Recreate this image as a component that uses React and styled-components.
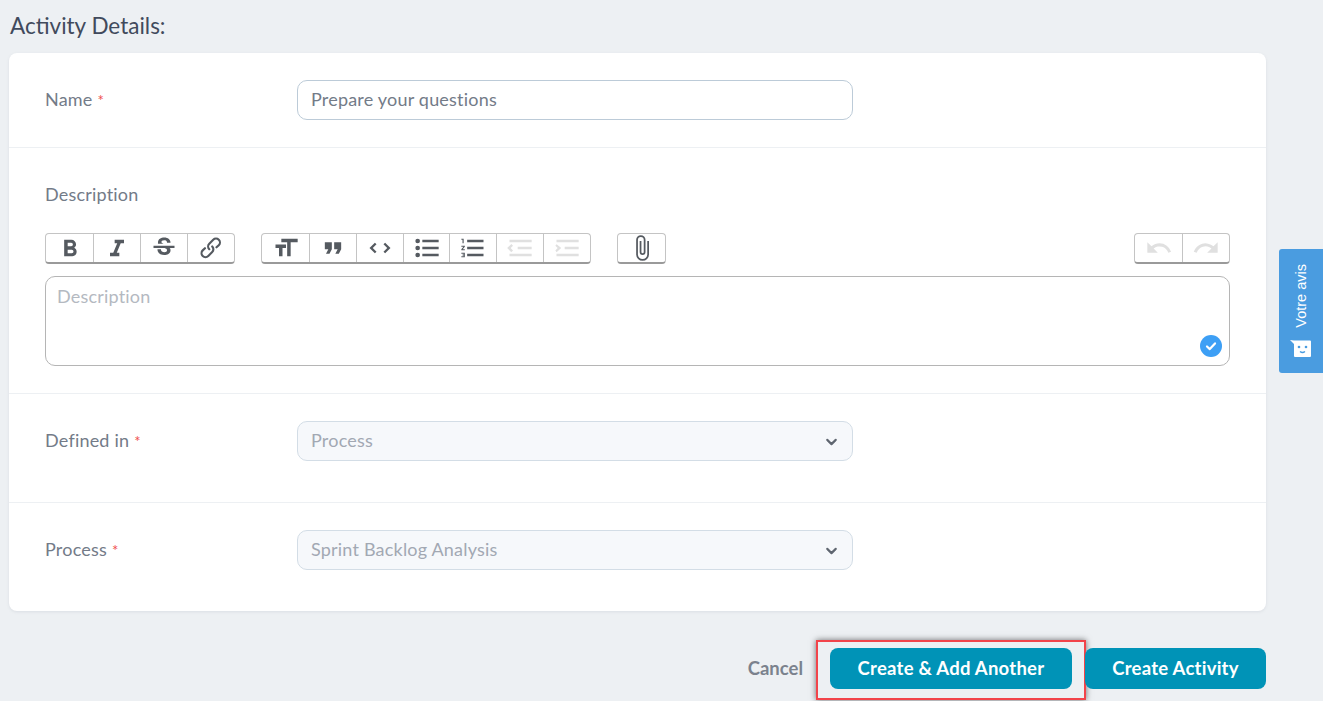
import React from "react";
import styled, { createGlobalStyle } from "styled-components";
import { ChevronDown } from "lucide-react";

const font = `"Lato", "Noto Sans", sans-serif`;

const Global = createGlobalStyle`
  html, body { margin: 0; padding: 0; background: #edf0f3; }
  body { font-family: ${font}; height: 701px; overflow: hidden; }
`;

const Page = styled.div`
  position: relative;
  width: 1323px;
  height: 701px;
  padding: 13px 57px 0 9px;
  box-sizing: border-box;
  background: #edf0f3;
  overflow: hidden;
`;
const Title = styled.h2`
  margin: 0 0 14px 1px;
  font-size: 22.5px;
  line-height: 26px;
  font-weight: 400;
  color: #414a5c;
`;
const Card = styled.div`
  background: #fff;
  border-radius: 8px;
  box-shadow: 0 1px 3px rgba(120, 130, 145, 0.15);
  height: 558px;
  display: flex;
  flex-direction: column;
`;
const Row = styled.div`
  display: flex;
  align-items: center;
  height: ${(p) => p.$h}px;
  padding: 0 36px ${(p) => p.$pb || 0}px;
  box-sizing: border-box;
  border-bottom: ${(p) => (p.$last ? "none" : "1px solid #edf0f3")};
`;
const DescRow = styled.div`
  height: 246px;
  padding: 35px 36px 0;
  box-sizing: border-box;
  border-bottom: 1px solid #edf0f3;
`;
const Label = styled.label`
  width: 252px;
  flex: none;
  font-size: 18px;
  letter-spacing: 0.2px;
  line-height: 22px;
  margin-bottom: 2px;
  color: #737b88;
`;
const Star = styled.span`
  color: #ef4d4d;
  font-size: 15px;
  margin-left: 5px;
`;
const Field = styled.div`
  width: 556px;
  height: 40px;
  box-sizing: border-box;
  border: 1px solid ${(p) => (p.$disabled ? "#d3dde6" : "#bccbd8")};
  border-radius: 10px;
  background: ${(p) => (p.$disabled ? "#f6f8fb" : "#fff")};
  display: flex;
  align-items: center;
  justify-content: space-between;
  padding: 0 12px 2px 13px;
  font-size: 18px;
  letter-spacing: 0.2px;
  color: ${(p) => (p.$disabled ? "#a2a8b3" : "#737b88")};
  svg { color: #5f6670; transform: translateY(1.5px); }
`;
const DescLabel = styled(Label)`
  display: block;
  width: auto;
  margin-bottom: 28px;
`;
const Toolbar = styled.div`
  display: flex;
  height: 31px;
  margin-bottom: 12px;
`;
const Group = styled.div`
  display: flex;
  border: 1px solid #c4c4c4;
  border-bottom: 2px solid #9a9a9a;
  border-radius: 4px;
  box-sizing: border-box;
  margin-right: ${(p) => p.$mr || 0}px;
  margin-left: ${(p) => (p.$push ? "auto" : 0)};
`;
const ToolButton = styled.span`
  width: ${(p) => p.$w || 47}px;
  box-sizing: border-box;
  display: flex;
  align-items: center;
  justify-content: center;
  color: ${(p) => (p.$off ? "#e0e0e0" : "#555a60")};
  & + & { border-left: 1px solid #c4c4c4; }
`;
const Editor = styled.div`
  position: relative;
  height: 90px;
  box-sizing: border-box;
  border: 1px solid #b5b5b5;
  border-radius: 10px;
  padding: 8px 11px;
  font-size: 18px;
  letter-spacing: 0.2px;
  line-height: 22px;
  color: #b4b9c1;
`;
const Check = styled.span`
  position: absolute;
  right: 7px;
  bottom: 8px;
  width: 22px;
  height: 22px;
  border-radius: 50%;
  background: #3d9ff5;
  display: flex;
  align-items: center;
  justify-content: center;
`;
const Footer = styled.div`
  display: flex;
  justify-content: flex-end;
  align-items: center;
  margin-top: 37px;
`;
const Cancel = styled.span`
  font-size: 18.5px;
  font-weight: 700;
  color: #7b828d;
  margin-right: 27px;
  padding-bottom: 1px;
`;
const Primary = styled.button`
  position: relative;
  width: ${(p) => p.$w}px;
  height: 41px;
  margin-right: ${(p) => p.$mr || 0}px;
  border: 0;
  border-radius: 8px;
  background: #0093b7;
  color: #fff;
  font: 700 18.5px ${font};
  letter-spacing: 0.25px;
  padding: 0 0 2px;
`;
const Highlight = styled.span`
  position: absolute;
  left: -14px;
  top: -8px;
  right: -14px;
  bottom: -11px;
  border: 2px solid #f2444a;
  box-shadow: 0 0 6px rgba(0, 0, 0, 0.55);
`;
const FeedbackTab = styled.div`
  position: absolute;
  left: 1279px;
  top: 249px;
  width: 44px;
  height: 124px;
  background: #4a9ce0;
  border-radius: 3px 0 0 3px;
  display: flex;
  flex-direction: column;
  align-items: center;
  justify-content: flex-end;
  padding-bottom: 15px;
  box-sizing: border-box;
  gap: 12px;
`;
const FeedbackText = styled.span`
  writing-mode: vertical-rl;
  transform: rotate(180deg);
  font: 14.5px "Liberation Sans", sans-serif;
  color: #fff;
`;

const Ico = ({ d, size = 28 }) => (
  <svg width={size} height={size} viewBox="0 0 24 24" fill="currentColor"><path d={d} /></svg>
);

const icons = {
  bold: "M15.6 11.8c1-.7 1.6-1.8 1.6-2.8a4 4 0 0 0-4-4H7v14h7c2.1 0 3.7-1.7 3.7-3.8 0-1.5-.8-2.8-2.1-3.4zM10 7.5h3a1.5 1.5 0 1 1 0 3h-3v-3zm3.5 9H10v-3h3.5a1.5 1.5 0 1 1 0 3z",
  italic: "M10 5v3h2.2l-3.4 8H6v3h8v-3h-2.2l3.4-8H18V5h-8z",
  strike: "M6.85 7.08C6.85 4.37 9.45 3 12.24 3c1.64 0 3 .49 3.9 1.28.77.65 1.46 1.73 1.46 3.24h-3.01c0-.31-.05-.59-.15-.85-.29-.86-1.2-1.28-2.25-1.28-1.86 0-2.34.72-2.34 1.37 0 .45.23.83.45 1.01.22.18.66.37 1.3.6H6.85c-.03-.1 0-.86 0-1.29zM21 12v-2H3v2h9.62c1.15.45 1.96.75 1.96 1.97 0 1-.81 1.67-2.28 1.67-1.54 0-2.93-.54-2.93-2.51H6.4c0 .55.08 1.13.24 1.58.81 2.29 3.29 3.3 5.67 3.3 2.27 0 5.3-.89 5.3-4.05 0-.34-.02-1.4-.79-2.01H21z",
  link: "M9.88 13.7a4.3 4.3 0 0 1 0-6.07l3.37-3.37a4.26 4.26 0 0 1 6.07 0 4.3 4.3 0 0 1 0 6.06l-1.96 1.72a.91.91 0 1 1-1.3-1.3l1.97-1.71a2.46 2.46 0 0 0-3.48-3.48l-3.38 3.37a2.46 2.46 0 0 0 0 3.48.91.91 0 1 1-1.3 1.3zM4.25 19.46a4.3 4.3 0 0 1 0-6.07l1.93-1.9a.91.91 0 1 1 1.3 1.3l-1.93 1.9a2.46 2.46 0 0 0 3.48 3.48l3.37-3.38c.96-.96.96-2.52 0-3.48a.91.91 0 1 1 1.3-1.3 4.3 4.3 0 0 1 0 6.07l-3.38 3.38a4.26 4.26 0 0 1-6.07 0z",
  heading: "M12 9v3H9v7H6v-7H3V9h9zM8 4h14v3h-6v12h-3V7H8V4z",
  quote: "M6 17h3l2-4V7H5v6h3zm8 0h3l2-4V7h-6v6h3z",
  code: "M18.2 12L15 15.2l1.4 1.4L21 12l-4.6-4.6L15 8.8l3.2 3.2zM5.8 12L9 8.8 7.6 7.4 3 12l4.6 4.6L9 15.2 5.8 12z",
  bullets: "M4 4a2 2 0 1 0 0 4 2 2 0 0 0 0-4zm0 6a2 2 0 1 0 0 4 2 2 0 0 0 0-4zm0 6a2 2 0 1 0 0 4 2 2 0 0 0 0-4zm4 3h14v-2H8v2zm0-6h14v-2H8v2zm0-8v2h14V5H8z",
  numbers: "M2 17h2v.5H3v1h1v.5H2v1h3v-4H2v1zm1-9h1V4H2v1h1v3zm-1 3h1.8L2 13.1v.9h3v-1H3.2L5 10.9V10H2v1zm5-6v2h14V5H7zm0 14h14v-2H7v2zm0-6h14v-2H7v2z",
  outdent: "M3 19h19v-2H3v2zm7-6h12v-2H10v2zm-8.3-.3l2.8 2.9L6 14.2 4 12l2-2-1.4-1.5L1 12l.7.7zM3 5v2h19V5H3z",
  indent: "M3 19h19v-2H3v2zm7-6h12v-2H10v2zm-6.9-4.3L2 10.1 4 12l-2 2.2 1.1 1.4L7 12l-.7-.7-3.2-2.6zM3 5v2h19V5H3z",
  attach: "M16.5 6v11.5a4 4 0 1 1-8 0V5a2.5 2.5 0 0 1 5 0v10.5a1 1 0 1 1-2 0V6H10v9.5a2.5 2.5 0 0 0 5 0V5a4 4 0 1 0-8 0v12.5a5.5 5.5 0 0 0 11 0V6h-1.5z",
  undo: "M12.5 8c-2.6 0-5 1-6.9 2.6L2 7v9h9l-3.6-3.6A8 8 0 0 1 20 16l2.4-.8a10.5 10.5 0 0 0-9.9-7.2z",
  redo: "M18.4 10.6a10.5 10.5 0 0 0-16.9 4.6L4 16a8 8 0 0 1 12.7-3.6L13 16h9V7l-3.6 3.6z",
};

const groups = [
  { mr: 26, items: [["bold"], ["italic"], ["strike"], ["link"]] },
  { mr: 26, items: [["heading"], ["quote"], ["code"], ["bullets", 46], ["numbers"], ["outdent", 47, true], ["indent", 47, true]] },
  { items: [["attach"]] },
  { push: true, items: [["undo", 47, true], ["redo", 47, true]] },
];

export default function App() {
  return (
    <Page>
      <Global />
      <Title>Activity Details:</Title>
      <Card>
        <Row $h={95}>
          <Label>Name<Star>*</Star></Label>
          <Field>Prepare your questions</Field>
        </Row>
        <DescRow>
          <DescLabel>Description</DescLabel>
          <Toolbar>
            {groups.map((g, i) => (
              <Group key={i} $mr={g.mr} $push={g.push}>
                {g.items.map(([n, w, off]) => (
                  <ToolButton key={n} $w={w} $off={off}><Ico d={icons[n]} /></ToolButton>
                ))}
              </Group>
            ))}
          </Toolbar>
          <Editor>
            Description
            <Check>
              <svg width="12" height="12" viewBox="0 0 12 12" fill="none" stroke="#fff" strokeWidth="2.2" strokeLinecap="round" strokeLinejoin="round"><path d="M2 6.5l2.8 2.6L10 3.4" /></svg>
            </Check>
          </Editor>
        </DescRow>
        <Row $h={109} $pb={14}>
          <Label>Defined in<Star>*</Star></Label>
          <Field $disabled>Process<ChevronDown size={17} strokeWidth={3} /></Field>
        </Row>
        <Row $h={108} $pb={14} $last>
          <Label>Process<Star>*</Star></Label>
          <Field $disabled>Sprint Backlog Analysis<ChevronDown size={17} strokeWidth={3} /></Field>
        </Row>
      </Card>
      <Footer>
        <Cancel>Cancel</Cancel>
        <Primary $w={242} $mr={13}>Create &amp; Add Another<Highlight /></Primary>
        <Primary $w={181}>Create Activity</Primary>
      </Footer>
      <FeedbackTab>
        <FeedbackText>Votre avis</FeedbackText>
        <svg width="22" height="18" viewBox="0 0 22 18" fill="#fff">
          <path d="M0 0l4 .5h16a1 1 0 0 1 1 1V16a1 1 0 0 1-1 1H5a1 1 0 0 1-1-1V4z" />
          <circle cx="9" cy="7" r="1.3" fill="#4a9ce0" />
          <circle cx="16" cy="7" r="1.3" fill="#4a9ce0" />
          <path d="M10 11.5c1.5 1.2 3.5 1.2 5 0" stroke="#4a9ce0" strokeWidth="1.4" fill="none" />
        </svg>
      </FeedbackTab>
    </Page>
  );
}
